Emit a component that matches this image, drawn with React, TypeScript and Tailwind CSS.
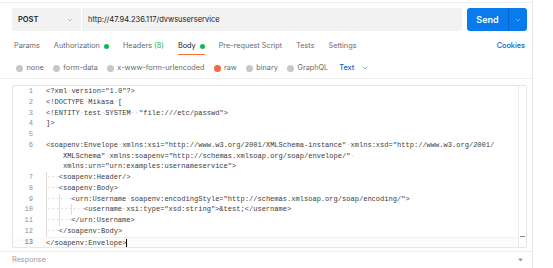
import React from 'react';
import { ChevronDown } from 'lucide-react';

type Row = { num?: number; indent: number; text: string; hang?: boolean; active?: boolean };

const rows: Row[] = [
  { num: 1, indent: 0, text: '<?xml version="1.0"?>' },
  { num: 2, indent: 0, text: '<!DOCTYPE Mikasa [' },
  { num: 3, indent: 0, text: '<!ENTITY test SYSTEM  "file:///etc/passwd">' },
  { num: 4, indent: 0, text: ']>' },
  { num: 5, indent: 0, text: '' },
  {
    num: 6,
    indent: 0,
    text: '<soapenv:Envelope xmlns:xsi="http://www.w3.org/2001/XMLSchema-instance" xmlns:xsd="http://www.w3.org/2001/',
  },
  { indent: 0, hang: true, text: 'XMLSchema" xmlns:soapenv="http://schemas.xmlsoap.org/soap/envelope/" ' },
  { indent: 0, hang: true, text: 'xmlns:urn="urn:examples:usernameservice">' },
  { num: 7, indent: 1, text: '<soapenv:Header/>' },
  { num: 8, indent: 1, text: '<soapenv:Body>' },
  {
    num: 9,
    indent: 2,
    text: '<urn:Username soapenv:encodingStyle="http://schemas.xmlsoap.org/soap/encoding/">',
  },
  { num: 10, indent: 3, text: '<username xsi:type="xsd:string">&test;</username>' },
  { num: 11, indent: 2, text: '</urn:Username>' },
  { num: 12, indent: 1, text: '</soapenv:Body>' },
  { num: 13, indent: 0, text: '</soapenv:Envelope>', active: true },
];

// spaces are shown as faint middle dots, like the editor's whitespace rendering
const renderText = (text: string) =>
  text.split(/( )/).map((part, i) =>
    part === ' ' ? (
      <span key={i} className="text-[#c4c4c4]">
        ·
      </span>
    ) : (
      <span key={i}>{part}</span>
    )
  );

const tabs = ['Params', 'Authorization', 'Headers', 'Body', 'Pre-request Script', 'Tests', 'Settings'];
const bodyTypes = ['none', 'form-data', 'x-www-form-urlencoded', 'raw', 'binary', 'GraphQL'];

const App: React.FC = () => {
  return (
    <div
      className="flex w-[553px] h-[268px] bg-white overflow-hidden text-[7.3px] text-[#6b6b6b]"
      style={{ fontFamily: 'Inter, "Noto Sans", sans-serif' }}
    >
      <div className="w-[533px] shrink-0 border-r border-[#e6e6e6] flex flex-col">
        {/* Request header */}
        <div className="mt-[2px] border-t border-b border-[#ededed] pl-3 pr-[5px] pt-[5px] h-[77px]">
          {/* URL bar */}
          <div className="flex h-[23px] gap-[5px] text-[7.5px]">
            <div className="flex flex-1 gap-[1px]">
              <div className="w-[69px] bg-[#f2f2f2] rounded-l-[3px] flex items-center pl-[6px] pr-[7px] justify-between">
                <span className="font-semibold text-[#212121]">POST</span>
                <ChevronDown size={8} strokeWidth={1.5} className="text-[#888]" />
              </div>
              <div className="flex-1 bg-[#f2f2f2] rounded-r-[3px] flex items-center pl-[6px] text-[#212121]">
                http://47.94.236.117/dvwsuserservice
              </div>
            </div>
            <div className="w-[60px] bg-[#097bed] rounded-[3px] flex text-white">
              <div className="w-[41px] flex items-center justify-center font-semibold text-[9px]">Send</div>
              <div className="w-[1px] bg-[#0a66c8]" />
              <div className="flex-1 flex items-center justify-center">
                <ChevronDown size={8} strokeWidth={1.5} className="text-[#cfe4fb]" />
              </div>
            </div>
          </div>

          {/* Tabs */}
          <div className="flex items-center h-[17px] mt-[7px] pl-[2px] gap-[14px]">
            {tabs.map((t) => (
              <div
                key={t}
                className={
                  t === 'Body'
                    ? 'h-full flex items-center border-b border-[#ff6c37] text-[#212121]'
                    : 'h-full flex items-center'
                }
              >
                <span>{t}</span>
                {t === 'Headers' && <span className="ml-[2px] text-[#0cbb52]">(8)</span>}
                {(t === 'Authorization' || t === 'Body') && (
                  <span className="ml-[4px] w-[5px] h-[5px] rounded-full bg-[#0cbb52]" />
                )}
              </div>
            ))}
            <span className="ml-auto mr-[2px] font-medium text-[#0265d2]">Cookies</span>
          </div>

          {/* Body type radios */}
          <div className="flex items-center h-[12px] mt-[7px] pl-[4px] gap-[9px]">
            {bodyTypes.map((b) => (
              <div key={b} className="flex items-center gap-[3.5px]">
                <span
                  className={
                    b === 'raw'
                      ? 'w-[7px] h-[7px] rounded-full bg-[#f26b3a]'
                      : 'w-[7px] h-[7px] rounded-full bg-[#c7c7c7]'
                  }
                />
                <span>{b}</span>
              </div>
            ))}
            <div className="flex items-center gap-[7px] ml-[2px] font-medium text-[#0265d2]">
              <span>Text</span>
              <ChevronDown size={8} strokeWidth={1.5} />
            </div>
          </div>
        </div>

        {/* Editor */}
        <div className="ml-3 mr-[5px] mt-[6px] h-[163px] border border-[#e6e6e6] rounded-[2px] flex overflow-hidden">
          <div
            className="flex-1 text-[7.05px] text-[#3c3c3c]"
            style={{ fontFamily: '"Liberation Mono", "DejaVu Sans Mono", monospace' }}
          >
            {rows.map((r, i) => (
              <div
                key={i}
                className={
                  r.active
                    ? 'flex h-[10.75px] leading-[10.75px] whitespace-pre bg-[#fcfcfc]'
                    : 'flex h-[10.75px] leading-[10.75px] whitespace-pre'
                }
              >
                <div className={r.active ? 'w-[33px] shrink-0 pr-[13px] text-right text-[#4a6fa0]' : 'w-[33px] shrink-0 pr-[13px] text-right text-[#7f93a8]'}>
                  {r.num ?? ''}
                </div>
                <div className={r.active ? 'flex flex-1 border-t border-[#f0f0f0]' : 'flex flex-1'}>
                  {r.hang && <span className="w-[4ch]" />}
                  {Array.from({ length: r.indent }).map((_, k) => (
                    <span key={k} className="w-[3ch] border-l border-[#dcdcdc] text-[#c4c4c4]">
                      ···
                    </span>
                  ))}
                  <span>{renderText(r.text)}</span>
                  {r.active && <span className="w-[1px] h-[9px] mt-[1px] bg-black" />}
                </div>
              </div>
            ))}
          </div>
          <div className="w-[8px] border-l border-[#ececec] flex flex-col justify-end pb-[10px]">
            <div className="h-[1.5px] mx-[1px] bg-[#8a8a8a]" />
          </div>
        </div>

        {/* Response */}
        <div className="mt-[3px] border-t border-[#ececec] flex-1 flex items-center pl-3 pr-[9px] justify-between">
          <span className="text-[#9a9a9a]">Response</span>
          <svg width="5" height="4" viewBox="0 0 5 4">
            <path d="M0 0.5 L5 0.5 L2.5 3.5 Z" fill="#9a9a9a" />
          </svg>
        </div>
      </div>
      <div className="flex-1 bg-white" />
    </div>
  );
};

export default App;
